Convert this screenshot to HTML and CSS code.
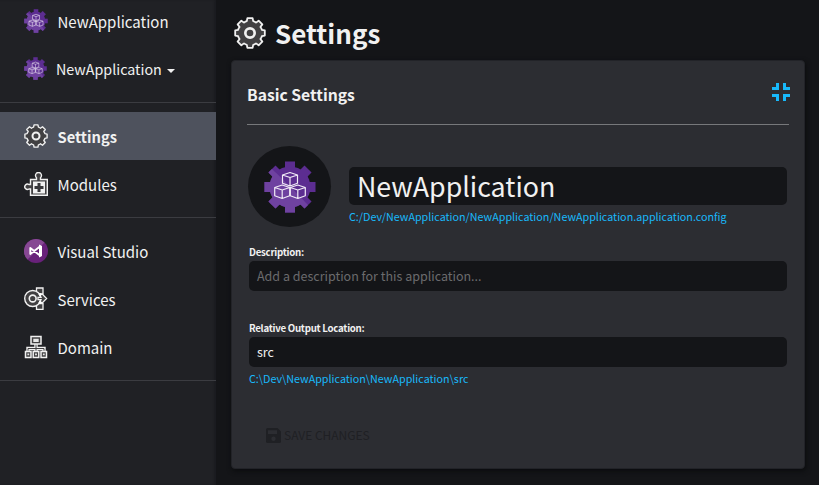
FILE: index.html
```
<!DOCTYPE html>
<html lang="en">
<head>
<meta charset="utf-8">
<title>Settings</title>
<link rel="stylesheet" href="styles.css">
</head>
<body>
<svg class="defs" width="0" height="0" aria-hidden="true">
  <defs>
    <g id="cog-shape">
      <circle r="20.5"/>
      <g id="teeth"><rect x="-5" y="-25.5" width="10" height="51"/><rect x="-25.5" y="-5" width="51" height="10"/></g>
      <use href="#teeth" transform="rotate(45)"/>
    </g>
    <clipPath id="lower"><path d="M-26-26L26 26H-26z"/></clipPath>
    <g id="cube" fill="none" stroke-linejoin="round"><path d="M0-7L7.5-4.5V3.8L0 6.5L-7.5 3.8V-4.5zM-7.5-4.5L0-2L7.5-4.5M0-2V6.5"/></g>
    <symbol id="app" viewBox="-26 -26 52 52">
      <use href="#cog-shape" fill="#5c2d91"/>
      <g clip-path="url(#lower)"><use href="#cog-shape" fill="#6f42a0"/></g>
      <g stroke="#f0eaf6" stroke-width="1.2"><use href="#cube" x="0" y="-7.5"/><use href="#cube" x="-7.8" y="5"/><use href="#cube" x="7.8" y="5"/></g>
    </symbol>
    <symbol id="gear" viewBox="-12 -12 24 24">
      <path fill="#414042" stroke="#f1f1f1" stroke-width="1.35" stroke-linejoin="round" d="M-1.96-11.1H1.96L2.4-8.9Q3.4-8.7 4.5-7.8L6.48-9.26L9.26-6.48L7.8-4.5Q8.7-3.4 8.9-2.4L11.1-1.96V1.96L8.9 2.4Q8.7 3.4 7.8 4.5L9.26 6.48L6.48 9.26L4.5 7.8Q3.4 8.7 2.4 8.9L1.96 11.1H-1.96L-2.4 8.9Q-3.4 8.7-4.5 7.8L-6.48 9.26L-9.26 6.48L-7.8 4.5Q-8.7 3.4-8.9 2.4L-11.1 1.96V-1.96L-8.9-2.4Q-8.7-3.4-7.8-4.5L-9.26-6.48L-6.48-9.26L-4.5-7.8Q-3.4-8.7-2.4-8.9z"/>
      <circle r="3.5" fill="#414042" stroke="#f1f1f1" stroke-width="2"/>
    </symbol>
  </defs>
</svg>
<div class="app">
  <nav class="sidebar">
    <a class="item brand"><svg class="icon"><use href="#app"/></svg><span>NewApplication</span></a>
    <a class="item picker"><svg class="icon"><use href="#app"/></svg><span>NewApplication</span><i class="caret"></i></a>
    <div class="group">
      <a class="item active"><svg class="icon"><use href="#gear"/></svg><span>Settings</span></a>
      <a class="item"><svg class="icon" viewBox="0 0 24 24">
        <path d="M6.5 7.5H12.5V5.7A3 3 0 1 1 16.5 5.7V7.5H23.3V23.3H6.5V17H5A2.7 2.7 0 1 1 5 12.5H6.5z" fill="#414042" stroke="#f1f1f1" stroke-width="1.4"/>
        <rect x="9" y="9.5" width="12" height="12" fill="#f1f1f1"/><path d="M15 11V20M10.5 15.5H19.5" stroke="#38383b" stroke-width="3"/></svg><span>Modules</span></a>
    </div>
    <div class="group tools">
      <a class="item"><svg class="icon" viewBox="0 0 24 24">
        <circle cx="12" cy="12" r="12" fill="#68217a"/><path d="M3.5 3.5A12 12 0 0 1 20.5 3.5L3.5 20.5A12 12 0 0 1 3.5 3.5z" fill="#864793"/>
        <path d="M6.3 9L16 16.6V7.4L6.3 15z" fill="none" stroke="#fff" stroke-width="1.9" stroke-linejoin="round"/><path d="M15 5.5L18 7V17L15 18.5z" fill="#fff"/></svg><span>Visual Studio</span></a>
      <a class="item"><svg class="icon" viewBox="0 0 24 24">
        <path d="M12.5 1H19V7H12.5zM12.5 16.5H19V22.3H12.5z" fill="#414042" stroke="#f1f1f1" stroke-width="1.3"/>
        <circle cx="8.7" cy="11.5" r="8" fill="#414042" stroke="#f1f1f1" stroke-width="1.4"/>
        <circle cx="8.7" cy="11.5" r="3.4" fill="#414042" stroke="#f1f1f1" stroke-width="1.6"/>
        <path d="M14 10.4H17L15.5 7.3H18.5L22.6 11.5L18.5 15.7H15.5L17 12.6H14z" fill="#414042" stroke="#f1f1f1" stroke-width="1.3"/><circle cx="16.2" cy="7.5" r="1.4" fill="#fff"/><circle cx="16.2" cy="15.5" r="1.4" fill="#fff"/></svg><span>Services</span></a>
      <a class="item"><svg class="icon" viewBox="0 0 24 24">
        <path d="M12 8V17M4 17V13.5H20V17" fill="none" stroke="#f1f1f1" stroke-width="3.4"/><path d="M12 8V17M4 17V13.5H20V17" fill="none" stroke="#414042" stroke-width="1"/>
        <path d="M7 1.4H17V9H7zM1.5 16.5H7V22.4H1.5zM9.2 16.5H14.8V22.4H9.2zM17 16.5H22.5V22.4H17z" fill="#414042" stroke="#f1f1f1" stroke-width="1.5"/>
        <path d="M9.3 3.7H14.7V7H9.3zM3.4 18.5H5.2V20.3H3.4zM11.1 18.5H12.9V20.3H11.1zM18.9 18.5H20.7V20.3H18.9z" fill="#e8e8e8"/></svg><span>Domain</span></a>
    </div>
  </nav>
  <main class="main">
    <h1 class="title"><svg class="title-icon"><use href="#gear"/></svg><span>Settings</span></h1>
    <section class="panel">
      <header class="panel-head"><h2>Basic Settings</h2>
        <svg class="compress" viewBox="0 0 18 18"><path d="M5.5 0V5.5H0M12.5 0V5.5H18M0 12.5H5.5V18M18 12.5H12.5V18" fill="none" stroke="#18b9fb" stroke-width="3"/></svg></header>
      <div class="identity">
        <div class="avatar"><svg><use href="#app"/></svg></div>
        <div class="name-field"><div class="input name"><span>NewApplication</span></div><a class="link">C:/Dev/NewApplication/NewApplication/NewApplication.application.config</a></div>
      </div>
      <div class="field"><label><span>Description:</span></label><div class="input placeholder"><span>Add a description for this application...</span></div></div>
      <div class="field output"><label><span>Relative Output Location:</span></label><div class="input"><span>src</span></div><a class="link">C:\Dev\NewApplication\NewApplication\src</a></div>
      <div class="save"><svg viewBox="0 0 15 15"><path fill="#1f2024" fill-rule="evenodd" d="M1.5 0H11.5L15 3.5V13.5Q15 15 13.5 15H1.5Q0 15 0 13.5V1.5Q0 0 1.5 0zM2 2.2V6H11V2.2zM7.5 8.5A2.2 2.2 0 1 0 7.5 12.9A2.2 2.2 0 1 0 7.5 8.5z"/></svg><span>SAVE CHANGES</span></div>
    </section>
  </main>
</div>
</body>
</html>
```
FILE: styles.css
```
* { box-sizing: border-box; }
body { margin: 0; background: #141518; color: #f1f1f1; font: 15px/24px "Noto Sans CJK SC", sans-serif; }
.defs { display: block; }
.app { display: flex; height: 485px; overflow: hidden; }
.sidebar { width: 216px; background: #202125; flex: none; box-shadow: inset -2px 0 2px #1b1c20; }
.item { display: flex; align-items: center; height: 48px; padding-left: 24px; gap: 9.5px; white-space: nowrap; }
.icon { width: 24px; height: 24px; flex: none; display: block; }
.item span { padding-top: 2px; }
.brand { height: 42px; }
.brand span { padding-top: 1px; }
.picker { height: 53px; gap: 9px; font-size: 14.3px; }
.picker span { padding-top: 0; }
.picker .icon { width: 23px; height: 23px; }
.caret { border: 4px solid transparent; border-top-color: #f1f1f1; border-bottom: 0; margin: 4px 0 0 -4px; }
.group { border-top: 1px solid #3b3c41; margin-top: 7px; padding: 9px 0; }
.active { background: #4e525d; font-weight: 700; font-size: 14.7px; }
.group + .group { margin-top: 0; border-bottom: 1px solid #3b3c41; }
.main { flex: 1; min-width: 0; padding: 16px 14px 0 15px; }
.title { display: flex; align-items: center; gap: 9px; height: 34px; margin: 0 0 10px 3px; font-size: 26px; line-height: 34px; }
.title-icon { width: 32px; height: 32px; }
.panel { height: 409px; background: #2c2d32; border: 1px solid #222328; border-radius: 4px; padding: 15px 17px 0 15px; box-shadow: 1px 2px 5px #0b0c0e; }
.panel-head { display: flex; justify-content: space-between; width: 542px; height: 49px; border-bottom: 1px solid #77787b; padding-top: 7px; }
h2 { margin: -1px 0 0; font-size: 15.7px; line-height: 26px; }
.compress { width: 18px; height: 18px; margin-right: -1px; }
.identity { display: flex; gap: 18px; padding: 21px 0 0 1px; height: 119px; }
.avatar { width: 83px; height: 81px; border-radius: 50%; background: #141518; display: grid; place-items: center; }
.avatar svg { width: 52px; height: 52px; }
.name-field { padding-top: 21px; flex: 1; }
.input { background: #141518; border-radius: 5px; height: 30px; padding-left: 8px; font-size: 12.5px; line-height: 30px; white-space: nowrap; }
.input.name { height: 38px; font-size: 26.8px; line-height: 38px; }
.placeholder { color: #6b6b6d; }
.link { display: block; color: #18b9fb; font-size: 10.75px; line-height: 24px; white-space: nowrap; }
.field { padding-left: 2px; height: 76px; }
label { display: block; font-size: 9.7px; letter-spacing: -0.26px; line-height: 16px; height: 17px; font-weight: 700; }
.save { display: flex; align-items: center; gap: 3px; margin: 19px 0 0 19px; height: 24px; color: #1f2024; font-size: 12px; }
.output { height: 84px; }
.save svg { width: 15px; height: 15px; }
```
